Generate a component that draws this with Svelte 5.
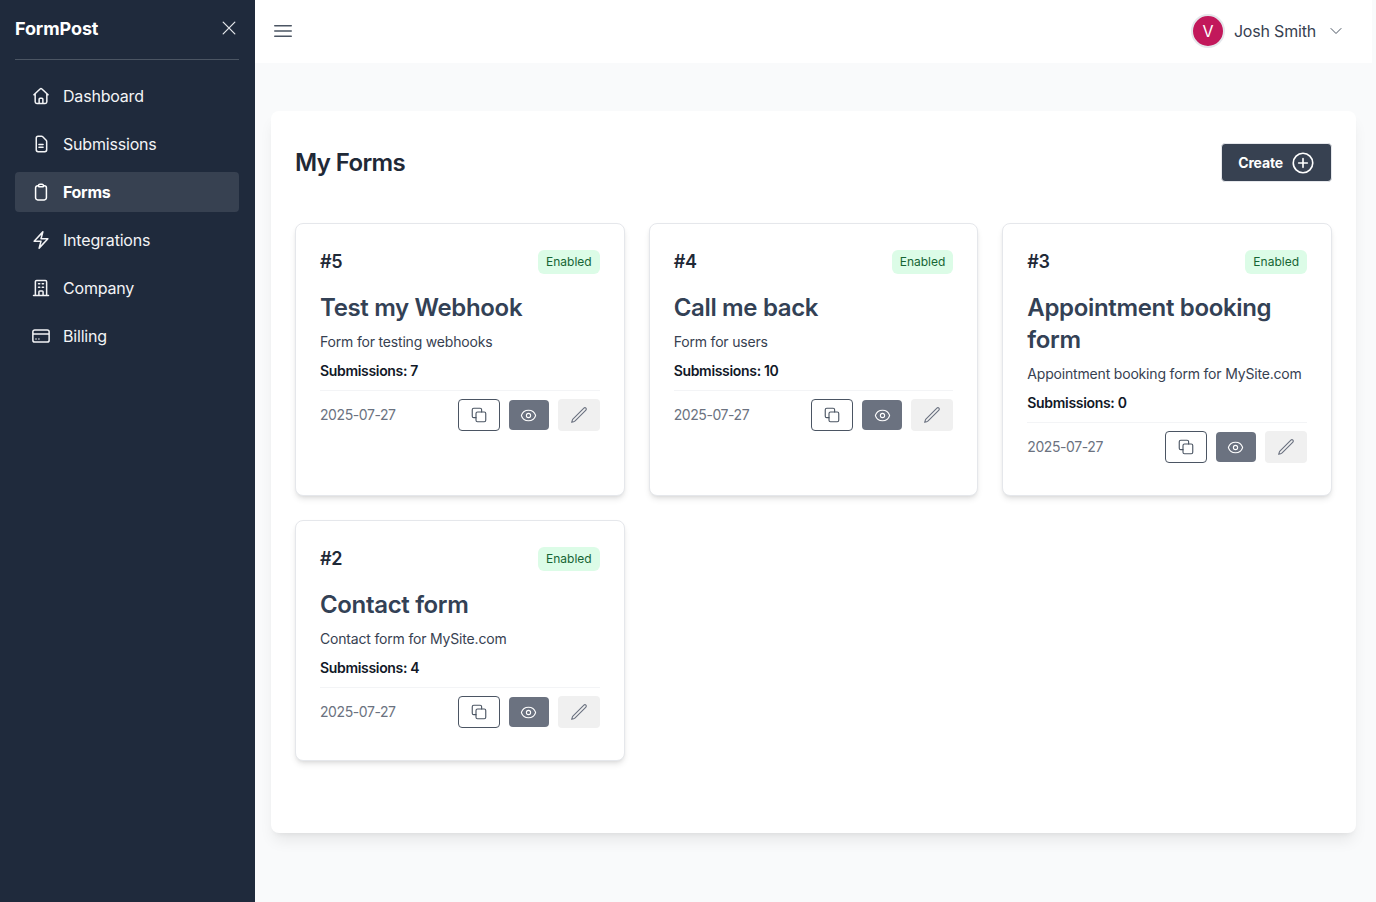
<script lang="ts">
	const navItems = [
		{ label: 'Dashboard', icon: 'home' },
		{ label: 'Submissions', icon: 'doc' },
		{ label: 'Forms', icon: 'clip', active: true },
		{ label: 'Integrations', icon: 'bolt' },
		{ label: 'Company', icon: 'building' },
		{ label: 'Billing', icon: 'card' }
	];

	const icons: Record<string, string> = {
		home: 'M3.5 10.5 10.9 3.6c.62-.58 1.58-.58 2.2 0l7.4 6.9M5 9.2V19a2 2 0 0 0 2 2h10a2 2 0 0 0 2-2V9.2M9.75 21v-5.25c0-.62.5-1.125 1.125-1.125h2.25c.62 0 1.125.5 1.125 1.125V21',
		doc: 'M8.5 2.75h4.2c.5 0 1 .2 1.4.58l4.1 4.1c.38.38.6.9.6 1.42V19a2.25 2.25 0 0 1-2.25 2.25h-8A2.25 2.25 0 0 1 6.3 19V5A2.25 2.25 0 0 1 8.5 2.75ZM9.5 12.5h5M9.5 16h5',
		clip: 'M15 4.5h1A2.5 2.5 0 0 1 18.5 7v12a2.5 2.5 0 0 1-2.5 2.5H8A2.5 2.5 0 0 1 5.5 19V7A2.5 2.5 0 0 1 8 4.5h1M9 4.5a1.75 1.75 0 0 1 1.75-1.75h2.5A1.75 1.75 0 0 1 15 4.5v.5a.75.75 0 0 1-.75.75h-4.5A.75.75 0 0 1 9 5Z',
		bolt: 'm3.75 13.5 10.5-11.25L12 10.5h8.25L9.75 21.75 12 13.5H3.75Z',
		building: 'M3 21h18M5.25 21V4.5A1.5 1.5 0 0 1 6.75 3h10.5a1.5 1.5 0 0 1 1.5 1.5V21M9 7h1.5M13.5 7H15M9 11h1.5M13.5 11H15M9.5 21v-4.5c0-.55.45-1 1-1h3c.55 0 1 .45 1 1V21',
		card: 'M2.25 9.5h19.5M6 15.5h.01M9.5 15.5h.01M4.5 4.75h15A2.25 2.25 0 0 1 21.75 7v10a2.25 2.25 0 0 1-2.25 2.25h-15A2.25 2.25 0 0 1 2.25 17V7A2.25 2.25 0 0 1 4.5 4.75Z'
	};

	const forms = [
		{ id: 5, title: 'Test my Webhook', desc: 'Form for testing webhooks', subs: 7 },
		{ id: 4, title: 'Call me back', desc: 'Form for users', subs: 10 },
		{ id: 3, title: 'Appointment booking form', desc: 'Appointment booking form for MySite.com', subs: 0 },
		{ id: 2, title: 'Contact form', desc: 'Contact form for MySite.com', subs: 4 }
	];
</script>

<div class="layout">
	<aside class="sidebar">
		<div class="brand">
			<span class="logo">FormPost</span>
			<svg class="close" viewBox="0 0 24 24" fill="none" stroke="currentColor" stroke-width="1.5">
				<path stroke-linecap="round" stroke-linejoin="round" d="M5 19 19 5M5 5l14 14" />
			</svg>
		</div>
		<nav>
			{#each navItems as item}
				<a class="nav-item" class:active={item.active} href="#top">
					<svg viewBox="0 0 24 24" fill="none" stroke="currentColor" stroke-width="1.8">
						<path stroke-linecap="round" stroke-linejoin="round" d={icons[item.icon]} />
					</svg>
					{item.label}
				</a>
			{/each}
		</nav>
	</aside>

	<div class="content">
		<header class="topbar">
			<svg class="burger" viewBox="0 0 24 24" fill="none" stroke="currentColor" stroke-width="1.5">
				<path stroke-linecap="round" stroke-linejoin="round" d="M3.75 6.75h16.5M3.75 12h16.5m-16.5 5.25h16.5" />
			</svg>
			<div class="user">
				<span class="avatar">V</span>
				<span class="name">Josh Smith</span>
				<svg class="chevron" viewBox="0 0 24 24" fill="none" stroke="currentColor" stroke-width="1.5">
					<path stroke-linecap="round" stroke-linejoin="round" d="m19.5 8.25-7.5 7.5-7.5-7.5" />
				</svg>
			</div>
		</header>

		<main>
			<section class="panel">
				<div class="panel-head">
					<h1>My Forms</h1>
					<button class="create">
						Create
						<svg viewBox="0 0 24 24" fill="none" stroke="currentColor" stroke-width="1.5">
							<path stroke-linecap="round" stroke-linejoin="round" d="M12 8v8m4-4H8m13 0a9 9 0 1 1-18 0 9 9 0 0 1 18 0Z" />
						</svg>
					</button>
				</div>

				<div class="grid">
					{#each forms as form}
						<article class="card">
							<div class="card-top">
								<span class="num">#{form.id}</span>
								<span class="badge">Enabled</span>
							</div>
							<h2>{form.title}</h2>
							<p class="desc">{form.desc}</p>
							<p class="subs">Submissions: {form.subs}</p>
							<div class="card-foot">
								<span class="date">2025-07-27</span>
								<div class="actions">
									<button class="btn copy" aria-label="Copy">
										<svg viewBox="0 0 24 24" fill="none" stroke="currentColor" stroke-width="1.5">
											<rect x="8" y="8" width="13" height="13" rx="2" />
											<path stroke-linecap="round" stroke-linejoin="round" d="M15.5 8V5a2 2 0 0 0-2-2H5a2 2 0 0 0-2 2v8.5a2 2 0 0 0 2 2h3" />
										</svg>
									</button>
									<button class="btn view" aria-label="View">
										<svg viewBox="0 0 24 24" fill="none" stroke="currentColor" stroke-width="1.5">
											<path stroke-linecap="round" stroke-linejoin="round" d="M2.036 12.322a1.012 1.012 0 0 1 0-.639C3.423 7.51 7.36 4.5 12 4.5c4.638 0 8.573 3.007 9.963 7.178.07.207.07.431 0 .639C20.577 16.49 16.64 19.5 12 19.5c-4.638 0-8.573-3.007-9.963-7.178Z" />
											<path stroke-linecap="round" stroke-linejoin="round" d="M15 12a3 3 0 1 1-6 0 3 3 0 0 1 6 0Z" />
										</svg>
									</button>
									<button class="btn edit" aria-label="Edit">
										<svg viewBox="0 0 24 24" fill="none" stroke="currentColor" stroke-width="1.5">
											<path stroke-linecap="round" stroke-linejoin="round" d="m16.862 4.487 1.687-1.688a1.875 1.875 0 1 1 2.652 2.652L6.832 19.82a4.5 4.5 0 0 1-1.897 1.13l-2.685.8.8-2.685a4.5 4.5 0 0 1 1.13-1.897L16.863 4.487Z" />
										</svg>
									</button>
								</div>
							</div>
						</article>
					{/each}
				</div>
			</section>
		</main>
	</div>
</div>

<style>
	:global(body) {
		background: #f9fafb;
		font-family: Inter, 'Liberation Sans', sans-serif;
		letter-spacing: -0.02em;
	}

	.layout {
		display: flex;
		min-height: 902px;
	}

	.sidebar {
		flex: 0 0 255px;
		box-sizing: border-box;
		background: #1f2a3c;
		color: #fff;
		padding: 0 16px 0 15px;
		height: 902px;
	}

	.brand {
		display: flex;
		justify-content: space-between;
		align-items: center;
		height: 60px;
		border-bottom: 1px solid #4b5563;
		padding-bottom: 3px;
		box-sizing: border-box;
	}

	.logo {
		font-size: 18px;
		font-weight: 700;
		letter-spacing: -0.006em;
	}

	.close {
		width: 20px;
		height: 20px;
		color: #e5e7eb;
	}

	nav {
		display: flex;
		flex-direction: column;
		gap: 8px;
		margin-top: 16px;
	}

	.nav-item {
		display: flex;
		align-items: center;
		gap: 12px;
		height: 40px;
		padding-left: 16px;
		border-radius: 4px;
		font-size: 16px;
		letter-spacing: -0.012em;
		color: #f3f4f6;
		text-decoration: none;
	}

	.nav-item svg {
		width: 20px;
		height: 20px;
	}

	.nav-item.active {
		background: #374151;
		font-weight: 700;
		letter-spacing: -0.02em;
		color: #fff;
	}

	.content {
		flex: 1;
		padding-right: 4px;
		min-width: 0;
	}

	.topbar {
		display: flex;
		justify-content: space-between;
		align-items: center;
		box-sizing: border-box;
		height: 63px;
		background: #fff;
		padding: 0 28px 1px 16px;
	}

	.burger {
		width: 24px;
		height: 24px;
		color: #4b5563;
	}

	.user {
		display: flex;
		align-items: center;
	}

	.avatar {
		display: flex;
		align-items: center;
		justify-content: center;
		width: 30px;
		height: 30px;
		margin-left: -1px;
		border-radius: 50%;
		border: 2px solid #e5e7eb;
		background: #c2185b;
		color: #fff;
		font-size: 16px;
	}

	.name {
		margin-left: 9px;
		font-size: 16px;
		letter-spacing: -0.012em;
		color: #374151;
	}

	.chevron {
		width: 16px;
		height: 16px;
		margin-left: 12px;
		color: #4b5563;
	}

	main {
		padding: 48px 16px 0;
	}

	.panel {
		background: #fff;
		border-radius: 8px;
		padding: 32px 24px 72px;
		box-shadow: 0 10px 15px -3px rgba(0, 0, 0, 0.08), 0 4px 6px -4px rgba(0, 0, 0, 0.08);
	}

	.panel-head {
		display: flex;
		justify-content: space-between;
		align-items: center;
		height: 40px;
		margin-bottom: 40px;
	}

	h1 {
		margin: 0 0 2px;
		font-size: 24px;
		font-weight: 600;
		letter-spacing: -0.025em;
		color: #1f2937;
	}

	.create {
		display: flex;
		align-items: center;
		gap: 8px;
		height: 39px;
		margin-bottom: 1px;
		padding: 0 16px;
		background: #374151;
		color: #fff;
		border: 1px solid #e5e7eb;
		border-radius: 4px;
		font: inherit;
		font-size: 14px;
		font-weight: 700;
		letter-spacing: -0.01em;
	}

	.create svg {
		width: 26px;
		height: 26px;
		margin: 0 -1px 0 -1px;
	}

	.grid {
		display: grid;
		grid-template-columns: repeat(3, 1fr);
		gap: 24px;
	}

	.card {
		border: 1px solid #e5e7eb;
		border-radius: 8px;
		padding: 24px 24px 32px;
		background: #fff;
		box-shadow: 0 4px 6px -1px rgba(0, 0, 0, 0.1), 0 2px 4px -2px rgba(0, 0, 0, 0.1);
		box-sizing: border-box;
	}

	.card-top {
		display: flex;
		justify-content: space-between;
		align-items: center;
		height: 26px;
	}

	.num {
		font-size: 18px;
		font-weight: 600;
		color: #1f2937;
	}

	.badge {
		margin-top: 2px;
		padding: 0 8px;
		height: 24px;
		line-height: 24px;
		border-radius: 6px;
		background: #dcfce7;
		color: #166534;
		font-size: 12px;
		letter-spacing: 0;
	}

	h2 {
		margin: 18px 0 0;
		font-size: 24px;
		line-height: 32px;
		font-weight: 600;
		letter-spacing: -0.014em;
		color: #334155;
	}

	.desc {
		margin: 8px 0 0;
		font-size: 14px;
		line-height: 20px;
		letter-spacing: -0.013em;
		color: #374151;
	}

	.subs {
		margin: 9px 0 0;
		font-size: 14px;
		line-height: 20px;
		font-weight: 600;
		color: #111827;
	}

	.card-foot {
		display: flex;
		justify-content: space-between;
		align-items: center;
		margin-top: 9px;
		padding-top: 8px;
		border-top: 1px solid #f3f4f6;
	}

	.date {
		font-size: 14px;
		letter-spacing: -0.03em;
		color: #6b7280;
		margin-bottom: 2px;
	}

	.actions {
		display: flex;
		align-items: center;
		gap: 9px;
	}

	.btn {
		display: flex;
		align-items: center;
		justify-content: center;
		height: 32px;
		width: 42px;
		padding: 0;
		border-radius: 4px;
		border: 0;
		box-sizing: border-box;
	}

	.btn svg {
		width: 18px;
		height: 18px;
	}

	.copy {
		background: #fff;
		border: 1px solid #4b5563;
		color: #4b5563;
	}

	.view {
		width: 40px;
		height: 30px;
		background: #6b7280;
		color: #fff;
	}

	.view svg {
		width: 17px;
		height: 17px;
	}

	.edit {
		background: #f0f0f0;
		color: #6b7280;
	}
</style>
